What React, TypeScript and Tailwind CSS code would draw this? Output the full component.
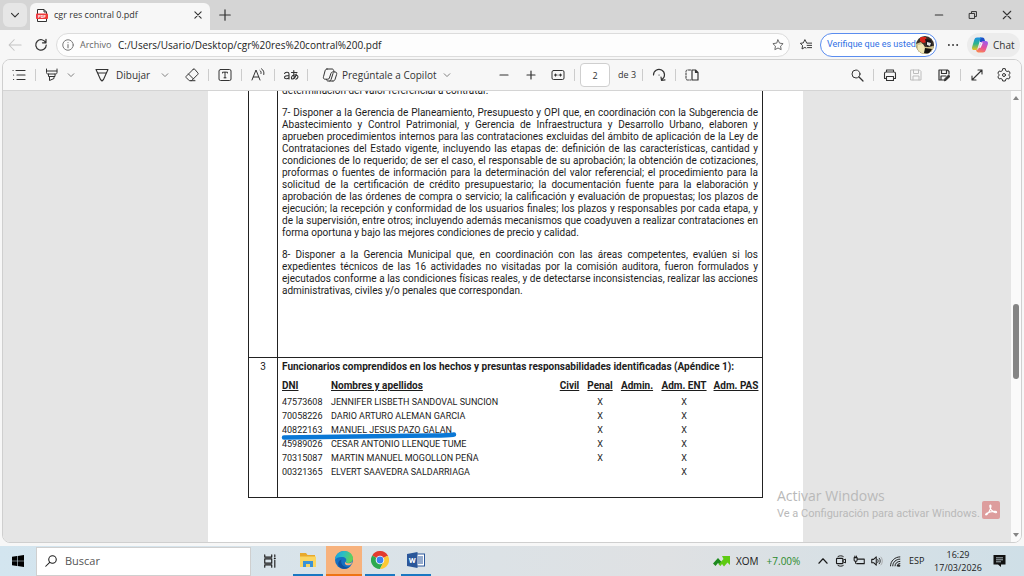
import React from 'react';

interface IconProps {
    size?: string;
    className?: string;
    children: React.ReactNode;
}

// 16x16 line icon used by the browser chrome and the PDF toolbar
const Icon: React.FC<IconProps> = ({ size = 'w-4 h-4', className = '', children }) => (
    <svg
        viewBox="0 0 16 16"
        className={`${size} shrink-0 ${className}`}
        fill="none"
        stroke="currentColor"
        strokeWidth="1"
        strokeLinecap="round"
        strokeLinejoin="round"
        aria-hidden="true"
    >
        {children}
    </svg>
);

const Chevron: React.FC<{ className?: string }> = ({ className = '' }) => (
    <Icon size="w-2.5 h-2.5" className={className}>
        <path d="M3.5 6 8 10.5 12.5 6" strokeWidth="1.5" />
    </Icon>
);

const Separator = () => <span className="mx-2 h-3 w-px shrink-0 bg-[#cccccc]" />;

const CopilotLogo = () => (
    <svg viewBox="0 0 18 18" className="h-[18px] w-[18px] shrink-0" aria-hidden="true">
        <defs>
            <linearGradient id="cp-left" x1="0" y1="0" x2="0" y2="1">
                <stop offset="0" stopColor="#1a8fe6" />
                <stop offset="0.5" stopColor="#2fb58a" />
                <stop offset="1" stopColor="#f2c318" />
            </linearGradient>
            <linearGradient id="cp-right" x1="0.6" y1="0" x2="0.2" y2="1">
                <stop offset="0" stopColor="#a25be8" />
                <stop offset="0.5" stopColor="#e8519a" />
                <stop offset="1" stopColor="#fb8a4c" />
            </linearGradient>
        </defs>
        <path d="M9 1.500h2.500c1.200 0 1.700.7 2 1.800l.8 2.700H9z" fill="#1c50c8" />
        <path d="M12 16.500H7.500c-1.200 0-1.900-.7-2.200-1.700L5 13.500h2l4-8.500h3.600c2.100 0 2.800 1.400 2.200 3.400l-2 5.600c-.5 1.700-1.400 2.500-2.800 2.500z" fill="url(#cp-right)" />
        <path d="M6 1.500h5c-1 .2-1.500 1-1.900 2.200L6.500 12.400c-.4 1.200-1 1.700-2 1.700H3.400C1.300 14.100.6 12.700 1.200 10.700L3.200 4C3.700 2.300 4.600 1.500 6 1.500z" fill="url(#cp-left)" />
        <path d="M10.400 6.500h1.500L9.700 11.800H7.900z" fill="#f7f7f7" />
    </svg>
);

const TabStrip = () => (
    <header className="flex h-[30px] shrink-0 items-end bg-[#d5d5d5]">
        <button type="button" aria-label="Buscar pestañas" className="mb-[3px] ml-[3px] flex h-6 w-6 items-center justify-center rounded-md bg-[#e6e6e6] text-[#333333]">
            <Chevron className="scale-125" />
        </button>
        <div className="ml-[3px] flex h-[27px] w-[180px] items-center rounded-t-md bg-[#f7f7f7] pb-[3px] pl-1.5 pr-[7px]">
            <svg viewBox="0 0 12 13" className="h-[13px] w-3 shrink-0" aria-hidden="true">
                <path d="M1.500 12.500V.5H8L10.500 3v9.500z" fill="#fff" stroke="#333" />
                <path d="M8 .5V3h2.500" fill="none" stroke="#333" />
                <rect x="0" y="4.500" width="12" height="5.500" rx=".8" fill="#ee3a3a" />
                <text x="6" y="8.800" fontSize="4.300" fontWeight="700" textAnchor="middle" fill="#fff" fontFamily="Roboto, sans-serif">PDF</text>
            </svg>
            <span className="ml-1.5 flex-1 whitespace-nowrap text-[9px] leading-4">cgr res contral 0.pdf</span>
            <button type="button" aria-label="Cerrar pestaña">
                <Icon size="w-2.5 h-2.5"><path d="M3 3l10 10M13 3 3 13" strokeWidth="1.800" /></Icon>
            </button>
        </div>
        <button type="button" aria-label="Nueva pestaña" className="mb-2 ml-2">
            <Icon size="w-3.5 h-3.5"><path d="M8 2v12M2 8h12" strokeWidth="1.400" /></Icon>
        </button>
        <div className="ml-auto mb-2.5 flex items-center gap-6 pr-3">
            <button type="button" aria-label="Minimizar"><Icon size="w-2.5 h-2.5"><path d="M2 8h12" strokeWidth="1.700" /></Icon></button>
            <button type="button" aria-label="Restaurar">
                <Icon size="w-2.5 h-2.5"><path d="M2.500 5.500h8v8h-8zM5.500 5V2.500h8v8H11" strokeWidth="1.600" /></Icon>
            </button>
            <button type="button" aria-label="Cerrar"><Icon size="w-2.5 h-2.5"><path d="M2 2l12 12M14 2 2 14" strokeWidth="1.700" /></Icon></button>
        </div>
    </header>
);

const AddressBar = () => (
    <div className="flex h-[29px] shrink-0 items-center bg-[#f7f7f7] pl-2 pr-1 pt-px">
        <button type="button" aria-label="Atrás" className="text-[#c4c4c4]">
            <Icon size="w-3.5 h-3.5"><path d="M15 8H1.500M7 2 1.200 8 7 14" strokeWidth="1.200" /></Icon>
        </button>
        <button type="button" aria-label="Actualizar" className="ml-3">
            <Icon size="w-3.5 h-3.5"><path d="M13.500 5.500A6 6 0 1 0 14 8M13.700 1.500v4h-4" strokeWidth="1.400" /></Icon>
        </button>
        <div className="ml-2 flex h-6 flex-1 items-center rounded-full border border-[#dcdcdc] bg-[#fdfdfd] px-[5px]">
            <Icon size="w-3 h-3" className="text-[#777777]">
                <circle cx="8" cy="8" r="7" strokeWidth="1.300" />
                <path d="M8 7.500v4M8 4.600v.2" strokeWidth="1.500" />
            </Icon>
            <span className="ml-1.5 w-[38px] text-[9px] text-[#666666]">Archivo</span>
            <input
                aria-label="Dirección"
                className="min-w-0 flex-1 bg-transparent text-[10px] text-[#222222] outline-none"
                defaultValue="C:/Users/Usario/Desktop/cgr%20res%20contral%200.pdf"
            />
            <button type="button" aria-label="Agregar a favoritos" className="text-[#666666]">
                <Icon size="w-3 h-3"><path d="m8 1.200 2.100 4.300 4.700.7-3.400 3.300.8 4.700L8 12l-4.200 2.200.8-4.700L1.200 6.200l4.700-.7z" strokeWidth="1.300" /></Icon>
            </button>
        </div>
        <button type="button" aria-label="Favoritos" className="ml-2.5">
            <Icon size="w-3 h-3">
                <path d="M9 5.500 6.500.8 4.400 5.200l-4 .6 3 3-.7 4.500L6.500 11.200 8 12M10 5.500h5.500M9.500 8.500h6M10 11.500h5.500" strokeWidth="1.300" />
            </Icon>
        </button>
        <button type="button" className="ml-2 flex h-6 w-[117px] items-center justify-between rounded-full border border-[#5b8def] bg-white pl-1.5 pr-0.5 font-[Roboto,sans-serif] text-[9px] text-[#2f6fe4]">
            <span className="whitespace-nowrap">Verifique que es usted</span>
            <svg viewBox="0 0 18 18" className="h-[18px] w-[18px] shrink-0 rounded-full" aria-hidden="true">
                <rect width="18" height="18" fill="#3b3128" />
                <path d="M0 8 5 6l4 5 9-1v8H0z" fill="#cfc18d" />
                <path d="M4 1h6l1 5-4 1-3-2z" fill="#d8251b" />
                <path d="M9 3l6 1 1 6-5 1z" fill="#15151a" />
                <path d="M11 6l4 1-1 3-3-1z" fill="#e3e3e0" />
                <path d="M2 9l5-1 3 7-3 3-5-4z" fill="#efe6b4" />
                <path d="M9 12l7 1-3 5-5-1z" fill="#17140f" />
            </svg>
        </button>
        <button type="button" aria-label="Configuración y más" className="ml-2.5">
            <Icon size="w-3 h-3"><path d="M2.500 8h.1M8 8h.1M13.500 8h.1" strokeWidth="2.400" /></Icon>
        </button>
        <button type="button" className="ml-2 flex h-6 w-[53px] items-center gap-1 rounded-full bg-[#ececec] pl-1 text-[10px]">
            <CopilotLogo />
            <span>Chat</span>
        </button>
    </div>
);

const PdfToolbar = () => (
    <div className="flex h-[31px] shrink-0 items-center border-b border-[#d4d4d4] bg-[#f7f7f7] pl-2 pr-[9px] text-[#333333]">
        <button type="button" aria-label="Contenido"><Icon><path d="M5 3.500h9M6 8h8M6 12.500h8M2 3.500h.1M2.500 8h.1M2.500 12.500h.1" strokeWidth="1.200" /></Icon></button>
        <Separator />
        <button type="button" aria-label="Resaltar"><Icon><path d="M2.500 2v3.500c0 1 .5 1.500 1.500 1.500h7.500c1 0 1.500-.5 1.500-1.500V2M2.800 4h10M4.500 7v2.500h6.500V7M5.500 9.500v4l4.500-2V9.500" /></Icon></button>
        <button type="button" aria-label="Opciones de resaltado" className="ml-1.5 text-[#777777]"><Chevron /></button>
        <button type="button" className="ml-[18px] flex w-[58px] items-center gap-1.5 text-[10px]">
            <Icon><path d="M2 2.500h12L9.500 12.500 8 14l-1.500-1.500zM4 6h8" strokeWidth="1.100" /></Icon>
            Dibujar
        </button>
        <button type="button" aria-label="Opciones de dibujo" className="ml-2 text-[#777777]"><Chevron /></button>
        <button type="button" aria-label="Borrar" className="ml-3.5"><Icon><path d="M9.300 2.200 2.300 9.200c-.5.5-.5 1 0 1.500l3 3h2.200l6.300-6.300c.5-.5.5-1 0-1.500L10.700 2.200c-.5-.4-1-.4-1.400 0zM4.500 7l5 5M7 13.700h4" /></Icon></button>
        <Separator />
        <button type="button" aria-label="Agregar texto"><Icon><rect x="2" y="2.500" width="12" height="11" rx="1.500" /><path d="M5.500 6V5.200h5V6M8 5.200v5.600M7 10.800h2" /></Icon></button>
        <Separator />
        <button type="button" aria-label="Leer en voz alta"><Icon><path d="M2 13 6 3l4 10M3.300 10h5.400M10 3.500c1 .7 1.300 1.700 1 3M11.500 1.800c2 1.300 2.800 3.200 2.300 5.700" /></Icon></button>
        <Separator />
        <button type="button" aria-label="Traducir">
            <Icon>
                <path d="M1.500 6.500C2.500 5 6 4.500 6 7v5M6 8.500C3 8.500 1.500 9 1.500 10.500S4.500 12.500 6 10.500M8.500 5.500h5.500M10.800 3.500c-.2 3 0 6 .5 8M13.300 7c-.8 3-2.500 5-4 5s-1.200-3.500 2-4c3-.3 4 1 3.500 2.500-.3 1-1 1.500-2 1.700" strokeWidth="1.100" />
            </Icon>
        </button>
        <Separator />
        <button type="button" className="ml-1.5 flex w-[116px] items-center gap-1 whitespace-nowrap text-[10px]">
            <Icon><path d="M5 2h5c1 0 1.500.6 1.700 1.500l.4 1.500h-1.300c-1 0-1.600.5-1.900 1.500L7.400 11c-.3.800-.7 1.200-1.500 1.200H3.200c-1.600 0-2.100-1-1.700-2.500L3 4c.3-1.300 1-2 2-2zM11 14H6c-1 0-1.300-.6-1.600-1.500M12 5h1c1.600 0 2 1 1.600 2.500L13 12.500c-.3 1-1 1.500-2 1.500M7.800 14c.8-.2 1-.8 1.300-1.600L11 6.500" /></Icon>
            Pregúntale a Copilot
        </button>
        <button type="button" aria-label="Opciones de Copilot" className="ml-1 text-[#777777]"><Chevron /></button>
        <div className="ml-11 flex items-center gap-[11px]">
            <button type="button" aria-label="Alejar"><Icon><path d="M4 8h8" strokeWidth="1.200" /></Icon></button>
            <button type="button" aria-label="Acercar"><Icon><path d="M8 4v8M4 8h8" strokeWidth="1.200" /></Icon></button>
            <button type="button" aria-label="Ajustar al ancho"><Icon><rect x="2" y="3.500" width="12" height="9" rx="1.500" /><path d="M4.500 8h2.500M9 8h2.500M5.500 7v2M10.500 7v2" strokeWidth="1.200" /></Icon></button>
        </div>
        <Separator />
        <input aria-label="Página" defaultValue="2" className="-ml-[3px] h-6 w-[30px] rounded-sm border border-[#cfcfcf] bg-white text-center text-[9px] outline-none" />
        <span className="ml-2 w-4 whitespace-nowrap text-[9px]">de 3</span>
        <Separator />
        <button type="button" aria-label="Girar"><Icon><path d="M2.500 8a5.500 5.500 0 1 1 8.500 4.500M14 12.800l-3.500.7-.5-3.500M8 8h.1" strokeWidth="1.200" /></Icon></button>
        <Separator />
        <button type="button" aria-label="Vista de página"><Icon><path d="M6.500 3H3.500C2.500 3 2 3.500 2 4.500v7c0 1 .5 1.500 1.500 1.500h3" strokeDasharray="2 1.300" /><path d="M8 3h3.500L14 5.500V13H8zM11.500 3v2.500H14" strokeWidth="1.200" /></Icon></button>
        <div className="ml-auto flex items-center">
            <button type="button" aria-label="Buscar en el documento"><Icon><circle cx="7" cy="7" r="4" /><path d="m10 10 4 4" strokeWidth="1.200" /></Icon></button>
            <Separator />
            <button type="button" aria-label="Imprimir"><Icon><path d="M4.500 5V3h7v2M4.500 11.500H2.500v-5C2.500 5.500 3 5 4 5h8c1 0 1.500.5 1.500 1.500v5h-2M4.500 9.500h7v4h-7z" strokeWidth="1.100" /></Icon></button>
            <button type="button" aria-label="Guardar" disabled className="ml-2.5 text-[#bdbdbd]"><Icon><path d="M3 3h8.500L13 4.500V13H3zM5.500 3v3.500h5V3M5 13V9h6v4" /></Icon></button>
            <button type="button" aria-label="Guardar como" className="ml-3"><Icon><path d="M8 13H3V3h8.500L13 4.500V7M5.500 3v3.500h5V3M5 13V9h5" strokeWidth="1.200" /><path d="m8.500 13.500.4-1.800L12.500 8l1.500 1.400-3.800 3.700z" fill="currentColor" /></Icon></button>
            <Separator />
            <button type="button" aria-label="Pantalla completa"><Icon><path d="M3 13 13 3M9 3h4v4M3 9v4h4" strokeWidth="1.100" /></Icon></button>
            <button type="button" aria-label="Configuración" className="ml-[11px]">
                <Icon><path d="m6.700 2-.4 1.700-1.400.8-1.700-.5-1.400 2.300L3.100 7.500v1L1.800 9.700 3.200 12l1.700-.5 1.400.8.4 1.700h2.600l.4-1.700 1.400-.8 1.700.5 1.400-2.300-1.300-1.200v-1l1.300-1.200L12.800 4l-1.700.5-1.400-.8L9.300 2z" /><circle cx="8" cy="8" r="1.500" /></Icon>
            </button>
        </div>
    </div>
);

const paragraphSeven = [
    '7- Disponer a la Gerencia de Planeamiento, Presupuesto y OPI que, en coordinación con la Subgerencia de',
    'Abastecimiento y Control Patrimonial, y Gerencia de Infraestructura y Desarrollo Urbano, elaboren y',
    'aprueben procedimientos internos para las contrataciones excluidas del ámbito de aplicación de la Ley de',
    'Contrataciones del Estado vigente, incluyendo las etapas de: definición de las características, cantidad y',
    'condiciones de lo requerido; de ser el caso, el responsable de su aprobación; la obtención de cotizaciones,',
    'proformas o fuentes de información para la determinación del valor referencial; el procedimiento para la',
    'solicitud de la certificación de crédito presupuestario; la documentación fuente para la elaboración y',
    'aprobación de las órdenes de compra o servicio; la calificación y evaluación de propuestas; los plazos de',
    'ejecución; la recepción y conformidad de los usuarios finales; los plazos y responsables por cada etapa, y',
    'de la supervisión, entre otros; incluyendo además mecanismos que coadyuven a realizar contrataciones en',
    'forma oportuna y bajo las mejores condiciones de precio y calidad.'
];

const paragraphEight = [
    '8- Disponer a la Gerencia Municipal que, en coordinación con las áreas competentes, evalúen si los',
    'expedientes técnicos de las 16 actividades no visitadas por la comisión auditora, fueron formulados y',
    'ejecutados conforme a las condiciones físicas reales, y de detectarse inconsistencias, realizar las acciones',
    'administrativas, civiles y/o penales que correspondan.'
];

// Each line is justified on its own, the last one stays ragged
const Paragraph: React.FC<{ lines: string[] }> = ({ lines }) => (
    <p>
        {lines.map((line, i) => (
            <span
                key={i}
                className={`block whitespace-nowrap ${i < lines.length - 1 ? '[text-align-last:justify]' : ''}`}
            >
                {line}
            </span>
        ))}
    </p>
);

const people = [
    { dni: '47573608', name: 'JENNIFER LISBETH SANDOVAL SUNCION', penal: true },
    { dni: '70058226', name: 'DARIO ARTURO ALEMAN GARCIA', penal: true },
    { dni: '40822163', name: 'MANUEL JESUS PAZO GALAN', penal: true, marked: true },
    { dni: '45989026', name: 'CESAR ANTONIO LLENQUE TUME', penal: true },
    { dni: '70315087', name: 'MARTIN MANUEL MOGOLLON PEÑA', penal: true },
    { dni: '00321365', name: 'ELVERT SAAVEDRA SALDARRIAGA', penal: false }
];

const PeopleTable = () => (
    <table className="mt-1 w-[480px] table-fixed text-[9px] leading-[14px]">
        <thead>
            <tr className="text-[10px] leading-[18px] underline">
                <th className="w-[49px] text-left">DNI</th>
                <th className="text-left">Nombres y apellidos</th>
                <th className="w-[29px]">Civil</th>
                <th className="w-8">Penal</th>
                <th className="w-[42px]">Admin.</th>
                <th className="w-[52px] whitespace-nowrap">Adm. ENT</th>
                <th className="w-[52px] whitespace-nowrap">Adm. PAS</th>
            </tr>
        </thead>
        <tbody>
            {people.map((p) => (
                <tr key={p.dni}>
                    <td className="relative">
                        {p.dni}
                        {p.marked && (
                            <svg viewBox="0 0 176 12" className="absolute -left-px top-2 h-3 w-44" aria-hidden="true">
                                <path d="M3 6.500C40 6 90 5.300 130 4.800S165 4.800 173 3.500" fill="none" stroke="#0a78d6" strokeWidth="4.500" strokeLinecap="round" />
                            </svg>
                        )}
                    </td>
                    <td>{p.name}</td>
                    <td />
                    <td className="text-center">{p.penal ? 'X' : ''}</td>
                    <td />
                    <td className="text-center">X</td>
                    <td />
                </tr>
            ))}
        </tbody>
    </table>
);

const DocumentPage = () => (
    <article className="w-[595px] shrink-0 bg-white px-10 font-[Roboto,sans-serif] text-[10px] leading-3 text-[#1c1c1c]">
        <div className="-mt-[7px] border border-[#222222]">
            <section className="flex h-[272px]">
                <div className="w-[29px] shrink-0 border-r border-[#222222]" />
                <div className="flex min-w-0 flex-1 flex-col gap-2.5 px-1">
                    <p>determinación del valor referencial a contratar.</p>
                    <Paragraph lines={paragraphSeven} />
                    <Paragraph lines={paragraphEight} />
                </div>
            </section>
            <section className="flex h-[140px] border-t border-[#222222]">
                <div className="w-[29px] shrink-0 border-r border-[#222222] pt-[3px] text-center">3</div>
                <div className="min-w-0 flex-1 pl-1 pt-[3px]">
                    <h2 className="whitespace-nowrap font-bold">
                        Funcionarios comprendidos en los hechos y presuntas responsabilidades identificadas (Apéndice 1):
                    </h2>
                    <PeopleTable />
                </div>
            </section>
        </div>
    </article>
);

const ScrollBar = () => (
    <div className="flex w-2.5 shrink-0 flex-col items-center justify-between bg-[#fafafa] py-1 text-[#858585]">
        <svg viewBox="0 0 8 6" className="h-1.5 w-2" aria-hidden="true"><path d="M1 5 4 1l3 4z" fill="currentColor" /></svg>
        <div className="flex w-1.5 flex-1 flex-col">
            <div className="flex-[202]" />
            <div className="h-[75px] rounded-full bg-[#858585]" />
            <div className="flex-[153]" />
        </div>
        <svg viewBox="0 0 8 6" className="h-1.5 w-2" aria-hidden="true"><path d="M1 1l3 4 3-4z" fill="currentColor" /></svg>
    </div>
);

const ActivationNotice = () => (
    <div className="absolute bottom-5 right-[21px] flex items-end text-[#b9b9b9]">
        <div className="w-[205px] whitespace-nowrap">
            <p className="text-sm leading-5">Activar Windows</p>
            <p className="font-[Roboto,sans-serif] text-[11px] leading-4">Ve a Configuración para activar Windows.</p>
        </div>
        <svg viewBox="0 0 18 18" className="mb-[3px] h-[18px] w-[18px]" aria-hidden="true">
            <rect width="18" height="18" rx="2" fill="#dd9d9d" />
            <path d="M4 14c1.500-.3 4.500-5 5-8.500.2-2-1.300-2-1.200-.3C8 8 11 11.500 13.500 11.800c1.500.1 1.500-1.300-.3-1.400C10.500 10.200 7 11 4.700 12.300 3.500 13 3.300 14 4 14z" fill="none" stroke="#fff" strokeWidth="1.100" />
        </svg>
    </div>
);

const TaskApp: React.FC<{ label: string; bar: string; active?: boolean; children: React.ReactNode }> = ({ label, bar, active, children }) => (
    <button type="button" aria-label={label} className={`flex h-full w-9 flex-col items-center ${active ? 'bg-[#f7b27d]' : ''}`}>
        <span className="flex flex-1 items-center">{children}</span>
        <span className={`h-0.5 ${bar}`} />
    </button>
);

const Taskbar = () => (
    <footer className="flex h-[30px] shrink-0 items-center bg-linear-to-r from-[#d3e5ef] via-[#dfe1e3] via-65% to-[#cfdfe7] text-[#1a1a1a]">
        <button type="button" aria-label="Inicio" className="flex w-9 justify-center">
            <svg viewBox="0 0 12 12" className="h-3 w-3" aria-hidden="true">
                <path d="M0 1.700 5 1v4.700H0zM5.600.9 12 0v5.700H5.600zM0 6.300h5V11l-5-.7zM5.600 6.300H12V12l-6.400-.9z" fill="#000" />
            </svg>
        </button>
        <label className="flex h-[29px] w-[215px] items-center gap-2 border border-[#cfcfcf] bg-white pl-2">
            <Icon size="w-3 h-3"><circle cx="10" cy="6" r="5" strokeWidth="1.400" /><path d="M6.300 9.700 1 15" strokeWidth="1.400" /></Icon>
            <input aria-label="Buscar" placeholder="Buscar" className="min-w-0 flex-1 bg-transparent text-[11px] outline-none placeholder:text-[#555555]" />
        </label>
        <button type="button" aria-label="Vista de tareas" className="ml-3">
            <Icon size="w-3.5 h-3.5"><path d="M2 1v2.500h8V1M2 15v-2.500h8V15M2 5.500h8v5H2zM13.500 1v2M13.500 7v8M13 5h1" strokeWidth="1.300" /></Icon>
        </button>
        <div className="ml-[13px] flex h-full">
            <TaskApp label="Explorador de archivos" bar="w-[30px] bg-[#1a78c2]">
                <svg viewBox="0 0 18 16" className="h-4 w-[18px]" aria-hidden="true">
                    <path d="M1 1h6l1.500 2H16v11H1z" fill="#e8a92c" />
                    <path d="M1 4.500h16V15H1z" fill="#fbd560" />
                    <path d="M4 9h10v6h-3v-3H7v3H4z" fill="#3a92d6" />
                </svg>
            </TaskApp>
            <TaskApp label="Microsoft Edge" bar="w-full bg-[#ee7414]" active>
                <svg viewBox="0 0 18 18" className="h-[18px] w-[18px]" aria-hidden="true">
                    <defs>
                        <linearGradient id="edge-top" x1="0" y1="0" x2="1" y2="0.300">
                            <stop offset="0" stopColor="#1d9be0" />
                            <stop offset="0.500" stopColor="#2bbfc4" />
                            <stop offset="1" stopColor="#5fd15a" />
                        </linearGradient>
                    </defs>
                    <circle cx="9" cy="9" r="9" fill="#1670c2" />
                    <path d="M0 9C.2 3.500 4 0 9 0c5.500 0 9 3.500 9 7.500 0 3-2.500 4.500-5 4.500-2 0-2.500-.8-2-1.500.8-1.500.3-4-3-4.500C4.500 5.500 1 6.500 0 9z" fill="url(#edge-top)" />
                    <path d="M6.500 8.500C5 13 9 17 14.500 16 12 18.300 7.500 18.500 5 16.500 2 14 3 9.500 6.500 8.500z" fill="#124f9c" />
                    <path d="M10.800 10.500c-.5.900.3 1.700 2.200 1.700 1.600 0 3-.4 4.500-1.300-.8 2.300-2.500 3.300-4.500 3.400-2.600.1-4.200-2-2.200-3.800z" fill="#f7b27d" />
                </svg>
            </TaskApp>
            <TaskApp label="Google Chrome" bar="w-[30px] bg-[#1a78c2]">
                <svg viewBox="0 0 18 18" className="h-[18px] w-[18px]" aria-hidden="true">
                    <path d="M9 9 1.200 4.500A9 9 0 0 1 16.800 4.500z" fill="#e33b2e" />
                    <path d="M9 9 1.200 4.500A9 9 0 0 0 9 18l3.500-7z" fill="#2da94f" />
                    <path d="M9 9l7.800-4.500A9 9 0 0 1 9 18l4-8z" fill="#fcc934" />
                    <path d="M9 5h8.100l-.3-.5L9 3z" fill="#e33b2e" />
                    <circle cx="9" cy="9" r="4.300" fill="#fff" />
                    <circle cx="9" cy="9" r="3.400" fill="#3b82f0" />
                </svg>
            </TaskApp>
            <TaskApp label="Microsoft Word" bar="w-[30px] bg-[#1a78c2]">
                <svg viewBox="0 0 18 16" className="h-4 w-[18px]" aria-hidden="true">
                    <rect x="8" y="2" width="9.500" height="12" fill="#fff" stroke="#2b579a" />
                    <path d="M11 5h5M11 7h5M11 9h5M11 11h5" stroke="#2b579a" />
                    <path d="M0 2 10.500 0v16L0 14z" fill="#2b579a" />
                    <text x="5.200" y="11" fontSize="8" fontWeight="700" textAnchor="middle" fill="#fff" fontFamily="Roboto, sans-serif">W</text>
                </svg>
            </TaskApp>
        </div>
        <div className="ml-auto flex items-center">
            <button type="button" className="flex w-[90px] items-center text-[10px]">
                <svg viewBox="0 0 17 12" className="mr-1.5 h-3 w-[17px]" aria-hidden="true">
                    <path d="M0 8.500 5 3l4 4.500L7 10 5 8l-2.500 3z" fill="#1e8a1e" />
                    <path d="M5.500 9.500 10.500 4 9 1h8v9l-2.500-2.500L11 11.500 9 9 7.500 11z" fill="#5ecb12" />
                </svg>
                <span>XOM</span>
                <span className="ml-2 text-[#2b8a2b]">+7.00%</span>
            </button>
            <div className="ml-3.5 flex items-center gap-1.5">
                <button type="button" aria-label="Mostrar iconos ocultos"><Icon size="w-3 h-3"><path d="M2.500 11 8 5l5.500 6" strokeWidth="1.500" /></Icon></button>
                <Icon size="w-3 h-3"><rect x="2" y="4.500" width="8.500" height="7" rx="1" strokeWidth="1.500" /><path d="M10.500 7 14 5.500v5L10.500 9M4 2c2-1.300 5-1.300 7 0M4 14c2 1.300 5 1.300 7 0" strokeWidth="1.300" /></Icon>
                <Icon size="w-3 h-3"><path d="M6.500 5.500H15v6H5M1.500 3.500h4v3c0 1.300-.8 2-2 2s-2-.7-2-2zM2.500 1.500v2M4.500 1.500v2M3.500 8.500V11" strokeWidth="1.400" /></Icon>
                <Icon size="w-3 h-3"><path d="M1 5.800h2.500L7 2.500v11l-3.500-3.300H1z" strokeWidth="1.400" /><path d="M9 6c.8 1.200.8 2.800 0 4M11 4.300c1.800 2.200 1.800 5.200 0 7.400" strokeWidth="1.200" /><path d="M13.300 2.800c2.400 3 2.400 7.400 0 10.400" stroke="#999999" /></Icon>
                <Icon size="w-3 h-3"><path d="M2 14.500C2 8 8 2.500 14.500 2.500M5 14.500c0-5 4.500-9 9.500-9M8 14.500c0-3.300 3-6 6.500-6M11 14.500c0-2 1.500-3 3.500-3" strokeWidth="1.300" /><path d="M12 13.500h2.500v1.500H12z" fill="currentColor" /></Icon>
            </div>
            <span className="ml-2 w-4 text-[9px]">ESP</span>
            <time className="ml-2 w-[50px] text-center text-[9px] leading-[13px]">
                <span className="block">16:29</span>
                <span className="block">17/03/2026</span>
            </time>
            <button type="button" aria-label="Notificaciones" className="ml-2.5 mr-[18px]">
                <svg viewBox="0 0 13 12" className="h-3 w-[13px]" aria-hidden="true">
                    <path d="M.5 0h12v9.500H8V12L5 9.500H.5z" fill="#111" />
                    <path d="M3 2.800h7M3 4.800h7M3 6.800h5" stroke="#cfdfe7" strokeWidth=".8" />
                </svg>
            </button>
        </div>
    </footer>
);

export default function App() {
    return (
        <div className="flex h-screen flex-col overflow-hidden bg-[#f7f7f7] font-['Open_Sans','Noto_Sans',sans-serif] text-[#333333]">
            <TabStrip />
            <AddressBar />
            <main className="relative mx-0.5 mb-[3px] flex min-h-0 flex-1 flex-col overflow-hidden rounded-lg border border-[#cfcfcf]">
                <PdfToolbar />
                <div className="flex min-h-0 flex-1 bg-[#e5e5e5]">
                    <div className="flex min-w-0 flex-1 justify-center overflow-hidden pr-[3px]">
                        <DocumentPage />
                    </div>
                    <ScrollBar />
                </div>
                <ActivationNotice />
            </main>
            <Taskbar />
        </div>
    );
}
